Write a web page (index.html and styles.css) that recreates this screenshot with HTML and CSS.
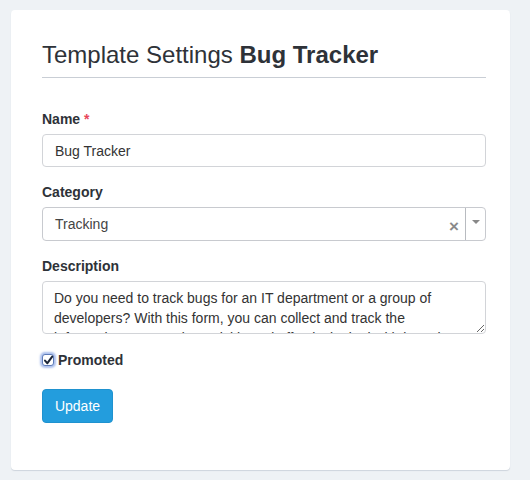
FILE: index.html
```html
<!DOCTYPE html>
<html lang="en">
<head>
<meta charset="utf-8">
<title>Template Settings</title>
<link rel="stylesheet" href="styles.css">
</head>
<body>
<div class="card">
  <h1 class="title">Template Settings <strong>Bug Tracker</strong></h1>
  <form class="form">
    <div class="group">
      <label class="label" for="name">Name <span class="req">*</span></label>
      <input class="control" id="name" type="text" value="Bug Tracker">
    </div>
    <div class="group">
      <label class="label">Category</label>
      <div class="select">
        <span class="select-value">Tracking</span>
        <span class="select-clear">&times;</span>
        <span class="select-toggle"><span class="caret"></span></span>
      </div>
    </div>
    <div class="group">
      <label class="label" for="desc">Description</label>
      <textarea class="control textarea" id="desc">Do you need to track bugs for an IT department or a group of developers? With this form, you can collect and track the information you need to quickly and effectively deal with bugs in your software.</textarea>
    </div>
    <label class="check-row">
      <input class="check-input" type="checkbox" checked>
      <span class="check-box">
        <svg width="11" height="11" viewBox="0 0 11 11"><path d="M2 5.6 L4.4 8.2 L9.2 1.6" fill="none" stroke="#1c2638" stroke-width="2" stroke-linecap="round" stroke-linejoin="round"/></svg>
      </span>
      <span class="check-label">Promoted</span>
    </label>
    <button class="btn" type="button">Update</button>
  </form>
</div>
</body>
</html>
```
FILE: styles.css
```css
html, body {
  margin: 0;
  padding: 0;
  background: #eef2f5;
}
body {
  padding: 10px 20px 10px 11px;
  font-family: "Liberation Sans", Arial, sans-serif;
  color: #333;
}
.card {
  box-sizing: border-box;
  width: 499px;
  height: 460px;
  background: #fff;
  border-radius: 4px;
  box-shadow: 0 1px 1px rgba(60, 80, 110, 0.18);
  padding: 32px 24px 0 31px;
}
.title {
  margin: 0 0 31px;
  padding-bottom: 9px;
  border-bottom: 1px solid #c9ced5;
  font-size: 24px;
  line-height: 26.4px;
  font-weight: normal;
  color: #2e3238;
}
.title strong {
  font-weight: bold;
}
.form {
  display: flex;
  flex-direction: column;
}
.group {
  margin-bottom: 15px;
}
.label {
  display: block;
  font-size: 14px;
  line-height: 20px;
  font-weight: bold;
  margin-bottom: 5px;
  color: #2e3238;
}
.req {
  color: #e8465a;
}
.control {
  box-sizing: border-box;
  display: block;
  width: 100%;
  height: 33px;
  margin: 0;
  padding: 6px 12px;
  border: 1px solid #d2d4d8;
  border-radius: 4px;
  font-family: "Liberation Sans", Arial, sans-serif;
  font-size: 14px;
  line-height: 20px;
  color: #333;
  background: #fff;
  outline: none;
}
.textarea {
  height: 53px;
  padding-left: 11px;
  overflow: hidden;
  resize: vertical;
}
.select {
  box-sizing: border-box;
  height: 34px;
  border: 1px solid #c8cacf;
  border-radius: 4px;
  display: flex;
  align-items: center;
  font-size: 14px;
  color: #444;
}
.select-value {
  flex: 1;
  padding-left: 12px;
}
.select-clear {
  width: 20px;
  text-align: center;
  color: #8a8a8a;
  font-size: 17px;
  font-weight: bold;
  line-height: 20px;
  margin-top: 6px;
}
.select-toggle {
  align-self: stretch;
  width: 19px;
  border-left: 1px solid #b8bbc0;
  display: flex;
  align-items: center;
  justify-content: center;
  margin-left: 1px;
}
.caret {
  width: 0;
  height: 0;
  border-left: 4px solid transparent;
  border-right: 4px solid transparent;
  border-top: 4px solid #888;
  margin-top: -5px;
}
.check-row {
  display: flex;
  align-items: center;
  margin-top: 1px;
  height: 20px;
}
.check-input {
  display: none;
}
.check-box {
  box-sizing: border-box;
  width: 12px;
  height: 12px;
  margin-right: 4px;
  border: 1px solid #5e7bb8;
  border-radius: 3px;
  background: #fff;
  box-shadow: 0 0 2px 2px rgba(90, 130, 220, 0.5);
  display: flex;
  align-items: center;
  justify-content: center;
}
.check-box svg {
  display: block;
  flex: none;
}
.check-label {
  font-size: 14px;
  line-height: 20px;
  font-weight: bold;
  color: #2e3238;
}
.btn {
  align-self: flex-start;
  margin-top: 19px;
  box-sizing: border-box;
  height: 34px;
  width: 71px;
  padding: 0;
  border: 1px solid #1f92cf;
  border-radius: 4px;
  background: #239ddd;
  color: #fff;
  font-family: "Liberation Sans", Arial, sans-serif;
  font-size: 14px;
  line-height: 20px;
}
```
